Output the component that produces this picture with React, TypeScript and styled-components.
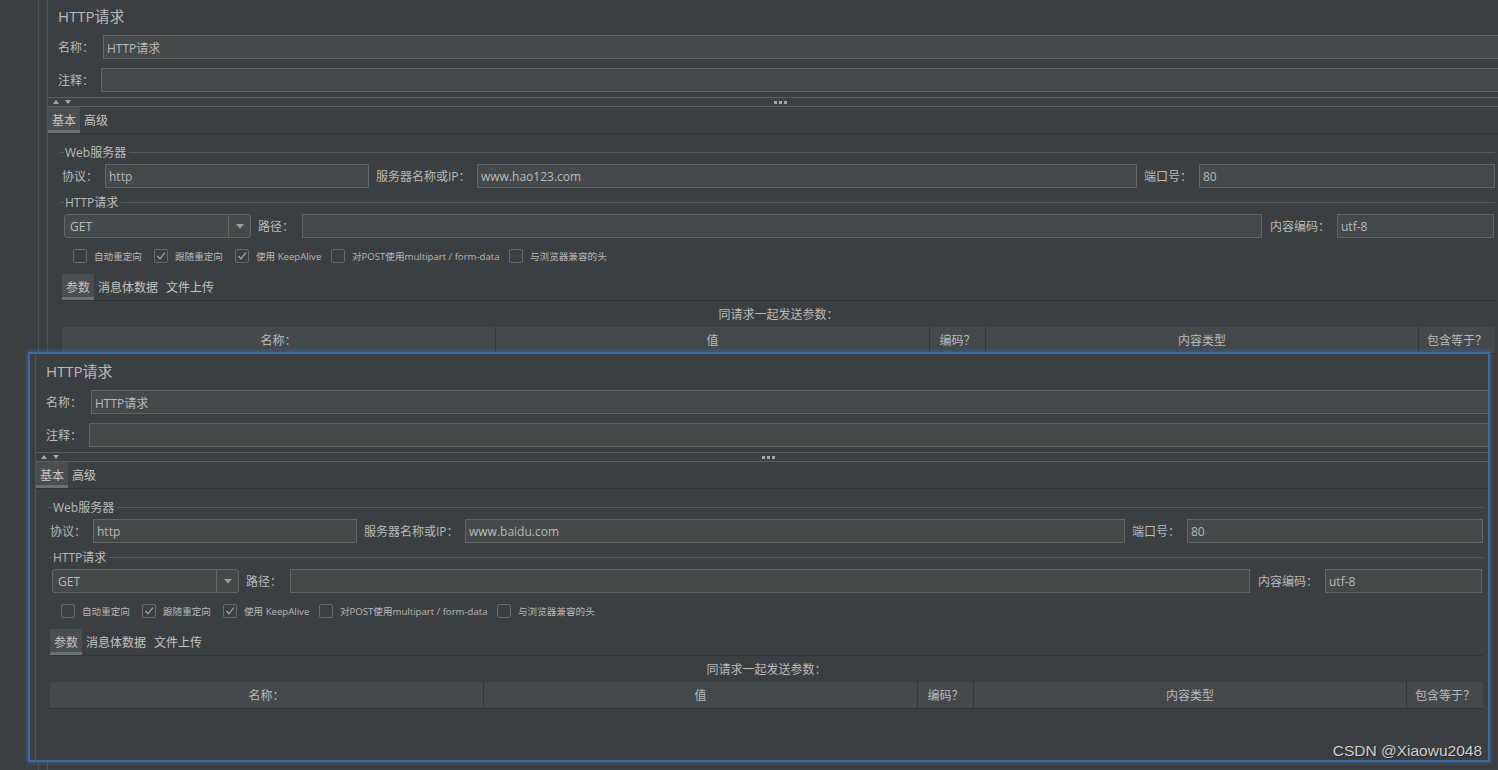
import React from 'react';
import styled, { createGlobalStyle } from 'styled-components';

const GlobalStyle = createGlobalStyle`
  * { box-sizing: border-box; }
  html, body { margin: 0; padding: 0; background: #3c3f41; }
  body {
    font-family: "Open Sans", "Noto Sans CJK SC", sans-serif;
    color: #bbbbbb;
  }
`;

const Page = styled.div`
  position: relative;
  width: 1498px;
  height: 770px;
  overflow: hidden;
  display: flex;
  background: #3c3f41;
`;

const Gutter = styled.div`
  width: 47px;
  flex: none;
  background: linear-gradient(
    to right,
    transparent 38px,
    #4f5254 38px,
    #4f5254 39px,
    transparent 39px
  );
`;

const PanelBox = styled.div`
  width: 1465px;
  height: 770px;
  flex: none;
  display: flex;
  flex-direction: column;
  border-left: 1px solid #505356;
  font-size: 12px;
`;

const Title = styled.div`
  height: 33px;
  line-height: 33px;
  padding-left: 10px;
  font-size: 15px;
  color: #bbbbbb;
`;

const FormRow = styled.div<{ $top: number; $left: number; $right?: number }>`
  display: flex;
  align-items: center;
  height: 24px;
  margin-top: ${(p) => p.$top}px;
  padding-left: ${(p) => p.$left}px;
  padding-right: ${(p) => p.$right || 0}px;
`;

const FieldLabel = styled.span<{ $w: number; $gap?: number }>`
  width: ${(p) => p.$w}px;
  margin-left: ${(p) => p.$gap || 0}px;
  flex: none;
  white-space: nowrap;
  font-size: 12px;
  height: 24px;
  padding-top: 2px;
  line-height: 22px;
  color: #bbbbbb;
`;

const TextInput = styled.input<{ $w?: number }>`
  height: 24px;
  ${(p) => (p.$w ? `width: ${p.$w}px; flex: none;` : 'flex: 1; min-width: 0;')}
  background: #45494a;
  border: 1px solid #646464;
  color: #bbbbbb;
  font-family: "Open Sans", "Noto Sans CJK SC", sans-serif;
  font-size: 12px;
  padding: 1px 3px 0;
  margin: 0;
  outline: none;
`;

const Splitter = styled.div`
  margin-top: 5px;
  height: 10px;
  border-top: 1px solid #5a5d60;
  border-bottom: 1px solid #5a5d60;
  display: grid;
  grid-template-columns: 1fr auto 1fr;
  align-items: center;
`;

const SplitArrows = styled.svg`
  margin-left: 5px;
  display: block;
`;

const SplitDots = styled.div`
  display: flex;
  gap: 2px;
  span {
    width: 3px;
    height: 3px;
    background: #a6a6a6;
  }
`;

const TabStrip = styled.div<{ $top?: number; $left?: number }>`
  display: flex;
  height: 27px;
  margin-top: ${(p) => p.$top || 0}px;
  margin-left: ${(p) => p.$left || 0}px;
  border-bottom: 1px solid #303234;
`;

const Tab = styled.div<{ $active?: boolean }>`
  height: 26px;
  padding: 2px 4px 0;
  line-height: 24px;
  font-size: 12px;
  color: #c4c4c4;
  background: ${(p) => (p.$active ? '#4b4e51' : 'transparent')};
  box-shadow: ${(p) => (p.$active ? 'inset 0 -3px 0 #6d7175' : 'none')};
`;

const TabBody = styled.div`
  display: flex;
  flex-direction: column;
  padding: 0 17px 0 12px;
`;

const Legend = styled.div<{ $top: number }>`
  display: flex;
  align-items: center;
  height: 16px;
  margin-top: ${(p) => p.$top}px;
  &::before {
    content: '';
    width: 4px;
    border-top: 1px solid #56595c;
  }
  &::after {
    content: '';
    flex: 1;
    border-top: 1px solid #56595c;
  }
`;

const LegendText = styled.span`
  position: relative;
  top: 1px;
  padding: 0 3px 0 1px;
  font-size: 12px;
  line-height: 16px;
`;

const Combo = styled.div`
  width: 187px;
  height: 24px;
  flex: none;
  display: flex;
  background: #45494a;
  border: 1px solid #646464;
  border-radius: 3px;
`;

const ComboValue = styled.span`
  flex: 1;
  padding: 1px 0 0 5px;
  line-height: 21px;
  font-size: 12px;
`;

const ComboArrow = styled.span`
  width: 22px;
  border-left: 1px solid #646464;
  display: flex;
  align-items: center;
  justify-content: center;
`;

const CheckRow = styled.div`
  display: flex;
  align-items: center;
  height: 14px;
  margin-top: 11px;
  padding-left: 13px;
`;

const CheckItem = styled.div<{ $w: number }>`
  width: ${(p) => p.$w}px;
  flex: none;
  display: flex;
  align-items: center;
  gap: 7px;
`;

const CheckBox = styled.span`
  width: 14px;
  height: 14px;
  flex: none;
  border: 1px solid #686a6c;
  border-radius: 2px;
  display: flex;
  align-items: center;
  justify-content: center;
`;

const CheckLabel = styled.span`
  padding-top: 1px;
  font-size: 9.6px;
  line-height: 13px;
  white-space: nowrap;
  color: #b8b8b8;
`;

const Caption = styled.div`
  height: 26px;
  padding-top: 2px;
  line-height: 24px;
  margin-left: 2px;
  text-align: center;
  font-size: 12px;
`;

const TableHead = styled.div`
  display: grid;
  grid-template-columns: 433px 434px 56px 433px 1fr;
  height: 27px;
  margin-left: 2px;
  background: #46494b;
  border-bottom: 1px solid #303234;
`;

const HeadCell = styled.div<{ $first?: boolean }>`
  padding-top: 2px;
  line-height: 24px;
  text-align: center;
  font-size: 12px;
  white-space: nowrap;
  border-left: ${(p) => (p.$first ? 'none' : '1px solid #333537')};
`;

const Snapshot = styled.div`
  position: absolute;
  left: 28px;
  top: 352px;
  width: 1462px;
  height: 410px;
  padding: 1px 0 0 5px;
  overflow: hidden;
  background: #3c3f41;
  border: 2px solid #3a6cab;
  box-shadow: 0 0 4px 1px rgba(60, 115, 190, 0.5);
`;

const Watermark = styled.div`
  position: absolute;
  right: 16px;
  top: 742px;
  font-family: "Liberation Sans", Arial, sans-serif;
  font-size: 15.5px;
  line-height: 18px;
  color: #cfcfcf;
  text-shadow: 1px 1px 1px rgba(0, 0, 0, 0.45);
`;

const Check = ({ on }: { on?: boolean }) => (
  <CheckBox>
    {on && (
      <svg width='10' height='10' viewBox='0 0 10 10'>
        <polyline
          points='1.5,5 4,7.8 8.8,1.6'
          fill='none'
          stroke='#a3a3a3'
          strokeWidth='1.3'
        />
      </svg>
    )}
  </CheckBox>
);

const options = [
  { label: '自动重定向', on: false, w: 81 },
  { label: '跟随重定向', on: true, w: 81 },
  { label: '使用 KeepAlive', on: true, w: 96 },
  { label: '对POST使用multipart / form-data', on: false, w: 178 },
  { label: '与浏览器兼容的头', on: false, w: 160 },
];

const HttpSamplerPanel = ({ server }: { server: string }) => (
  <PanelBox>
    <Title>HTTP请求</Title>
    <FormRow $top={2} $left={10}>
      <FieldLabel $w={45}>名称：</FieldLabel>
      <TextInput readOnly value='HTTP请求' />
    </FormRow>
    <FormRow $top={9} $left={10}>
      <FieldLabel $w={43}>注释：</FieldLabel>
      <TextInput readOnly value='' />
    </FormRow>
    <Splitter>
      <SplitArrows width='18' height='5' viewBox='0 0 18 5'>
        <polygon points='0,4 3,0 6,4' fill='#a8a8a8' />
        <polygon points='12,0 18,0 15,4' fill='#a8a8a8' />
      </SplitArrows>
      <SplitDots>
        <span />
        <span />
        <span />
      </SplitDots>
      <span />
    </Splitter>
    <TabStrip>
      <Tab $active>基本</Tab>
      <Tab>高级</Tab>
    </TabStrip>
    <TabBody>
      <Legend $top={10}>
        <LegendText>Web服务器</LegendText>
      </Legend>
      <FormRow $top={4} $left={2}>
        <FieldLabel $w={43}>协议：</FieldLabel>
        <TextInput $w={264} readOnly value='http' />
        <FieldLabel $w={101} $gap={7}>
          服务器名称或IP：
        </FieldLabel>
        <TextInput $w={660} readOnly value={server} />
        <FieldLabel $w={55} $gap={7}>
          端口号：
        </FieldLabel>
        <TextInput readOnly value='80' />
      </FormRow>
      <Legend $top={6}>
        <LegendText>HTTP请求</LegendText>
      </Legend>
      <FormRow $top={4} $left={4} $right={1}>
        <Combo>
          <ComboValue>GET</ComboValue>
          <ComboArrow>
            <svg width='8' height='5' viewBox='0 0 8 5'>
              <polygon points='0,0 8,0 4,4.5' fill='#a0a0a0' />
            </svg>
          </ComboArrow>
        </Combo>
        <FieldLabel $w={44} $gap={7}>
          路径：
        </FieldLabel>
        <TextInput $w={960} readOnly value='' />
        <FieldLabel $w={67} $gap={8}>
          内容编码：
        </FieldLabel>
        <TextInput readOnly value='utf-8' />
      </FormRow>
      <CheckRow>
        {options.map((o) => (
          <CheckItem key={o.label} $w={o.w}>
            <Check on={o.on} />
            <CheckLabel>{o.label}</CheckLabel>
          </CheckItem>
        ))}
      </CheckRow>
      <TabStrip $top={11} $left={2}>
        <Tab $active>参数</Tab>
        <Tab>消息体数据</Tab>
        <Tab>文件上传</Tab>
      </TabStrip>
      <Caption>同请求一起发送参数：</Caption>
      <TableHead>
        <HeadCell $first>名称：</HeadCell>
        <HeadCell>值</HeadCell>
        <HeadCell>编码？</HeadCell>
        <HeadCell>内容类型</HeadCell>
        <HeadCell>包含等于？</HeadCell>
      </TableHead>
    </TabBody>
  </PanelBox>
);

const App = () => (
  <>
    <GlobalStyle />
    <Page>
      <Gutter />
      <HttpSamplerPanel server='www.hao123.com' />
      <Snapshot>
        <HttpSamplerPanel server='www.baidu.com' />
      </Snapshot>
      <Watermark>CSDN @Xiaowu2048</Watermark>
    </Page>
  </>
);

export default App;
